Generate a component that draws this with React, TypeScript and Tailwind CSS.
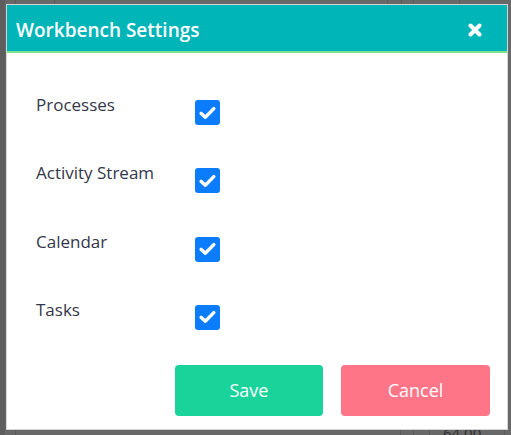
import React from "react";

const items = ["Processes", "Activity Stream", "Calendar", "Tasks"];

function Check() {
  return (
    <div className="w-[25px] h-[25px] rounded-[3px] bg-[#0b7cfc] flex items-center justify-center">
      <svg width="17" height="14" viewBox="0 0 17 14">
        <path d="M2.2 7.4 L6.3 11.2 L14.8 2.6" fill="none" stroke="#fff" strokeWidth="3.4" strokeLinecap="round" strokeLinejoin="round" />
      </svg>
    </div>
  );
}

export default function App() {
  const vlinesTop = [15, 54, 387, 401, 413, 459];
  const vlinesBottom = [15, 400, 413, 429, 504];
  return (
    <div className="relative w-[511px] h-[435px] overflow-hidden bg-[#686868] pt-[4px] pl-[6px]" style={{ fontFamily: '"Open Sans", "Noto Sans", sans-serif' }}>
      {vlinesTop.map((x) => (
        <div key={"t" + x} className="absolute top-0 h-[6px] w-px bg-[#5a5a5a]" style={{ left: x }} />
      ))}
      {vlinesBottom.map((x) => (
        <div key={"b" + x} className="absolute bottom-0 h-[8px] w-px bg-[#5a5a5a]" style={{ left: x }} />
      ))}
      <div className="absolute left-0 top-0 w-[5px] h-full bg-[#5e5e5e]" />
      <div className="absolute left-[443px] top-[424px] text-[15px] leading-[18px] text-[#2e2e2e]">64.00</div>

      <div className="relative z-10 w-[502px] h-[426px] border border-[#d4d4d4] bg-white flex flex-col">
        <div className="h-[48px] bg-[#00b5b8] border-b-2 border-[#7fe08d] flex items-center justify-between pl-[9px] pr-[25px] pt-[3px]">
          <span className="text-white font-semibold text-[19px] leading-[24px]">Workbench Settings</span>
          <svg width="14" height="14" viewBox="0 0 14 14">
            <path d="M2.5 2.5 L11.5 11.5 M11.5 2.5 L2.5 11.5" stroke="#fff" strokeWidth="4" strokeLinecap="round" />
          </svg>
        </div>
        <div className="pt-[40px] pl-[29px]">
          {items.map((label) => (
            <div key={label} className="h-[68.25px] flex items-start">
              <div className="w-[159px] text-[17px] font-medium leading-[24px] text-[#34374b]">{label}</div>
              <div className="mt-[7px]">
                <Check />
              </div>
            </div>
          ))}
        </div>
        <div className="flex justify-end gap-[18px] pr-[17px] mt-[-1px]">
          <button className="w-[148px] h-[51px] rounded-[4px] bg-[#19d39b] text-white text-[18px]">Save</button>
          <button className="w-[149px] h-[51px] rounded-[4px] bg-[#ff7588] text-white text-[18px]">Cancel</button>
        </div>
      </div>
    </div>
  );
}
